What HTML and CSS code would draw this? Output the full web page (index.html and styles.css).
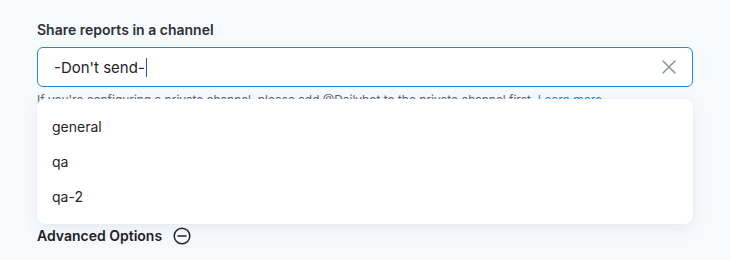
FILE: index.html
```html
<!DOCTYPE html>
<html>
<head>
<meta charset="utf-8">
<link rel="stylesheet" href="styles.css">
</head>
<body>
<div class="page">
  <div class="field">
    <div class="label">Share reports in a channel</div>
    <div class="select">
      <div class="value">-Don't send-<span class="caret"></span></div>
      <svg class="clear" width="14" height="14" viewBox="0 0 14 14"><path d="M1 1L13 13M13 1L1 13" stroke="#8a94a6" stroke-width="1.5" fill="none" stroke-linecap="round"/></svg>
      <ul class="menu">
        <li>general</li>
        <li>qa</li>
        <li>qa-2</li>
      </ul>
    </div>
    <div class="help">If you're configuring a private channel, please add @Dailybot to the private channel first. <a class="link">Learn more</a></div>
  </div>
  <div class="advanced">
    <span>Advanced Options</span>
    <svg width="18" height="18" viewBox="0 0 18 18"><circle cx="9" cy="9" r="7.8" stroke="#1f2329" stroke-width="1.5" fill="none"/><path d="M5 9H13" stroke="#1f2329" stroke-width="1.5" stroke-linecap="round"/></svg>
  </div>
</div>
</body>
</html>
```
FILE: styles.css
```css
html, body { margin: 0; padding: 0; }
body { background: #f7fafd; font-family: Inter, "Noto Sans", sans-serif; color: #1f2329; }
.page { padding: 20px 37px 0 37px; width: 656px; }
.label { font-size: 14px; font-weight: 600; line-height: 20px; color: #2b2f36; margin-bottom: 7px; }
.select { position: relative; height: 40px; box-sizing: border-box; border: 1px solid #1e88e5; border-radius: 6px; background: #fff; display: flex; align-items: center; justify-content: space-between; padding: 0 16px 0 16px; }
.value { font-size: 15px; color: #1f2329; display: flex; align-items: center; }
.caret { display: inline-block; width: 1px; height: 19px; background: #1a5fc4; margin-left: 1px; }
.clear { display: block; }
.menu { position: absolute; left: -1px; right: -1px; top: 51px; margin: 0; padding: 10px 0; list-style: none; background: #fff; border-radius: 8px; box-shadow: 0 5px 18px rgba(30, 40, 90, 0.07), 0 0 2px rgba(30,40,90,0.05); z-index: 2; }
.menu li { height: 35px; line-height: 35px; padding-left: 15px; font-size: 14px; color: #1f2329; }
.help { font-size: 11.9px; line-height: 16px; color: #5f6672; margin-top: 5px; white-space: nowrap; }
.link { color: #1e88e5; }
.advanced { margin-top: 118px; display: flex; align-items: center; gap: 11px; font-size: 14px; font-weight: 600; line-height: 20px; color: #1f2329; }
.advanced svg { display: block; }
```
